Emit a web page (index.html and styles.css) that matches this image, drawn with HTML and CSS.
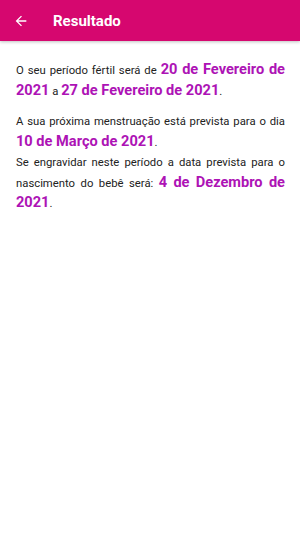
FILE: index.html
```
<!DOCTYPE html>
<html lang="pt">
<head>
<meta charset="utf-8">
<link rel="stylesheet" href="styles.css">
</head>
<body>
<header class="bar">
  <svg class="back" width="16" height="16" viewBox="0 0 24 24"><path d="M20 11H7.83l5.59-5.59L12 4l-8 8 8 8 1.41-1.41L7.83 13H20v-2z" fill="#fff"/></svg>
  <span class="title">Resultado</span>
</header>
<main class="content">
  <p class="para">O seu período fértil será de <b class="hl">20 de Fevereiro de 2021</b> a <b class="hl">27 de Fevereiro de 2021</b>.</p>
  <p class="para">A sua próxima menstruação está prevista para o dia <b class="hl">10 de Março de 2021</b>.<br>Se engravidar neste período a data prevista para o nascimento do bebê será: <b class="hl">4 de Dezembro de 2021</b>.</p>
</main>
</body>
</html>
```
FILE: styles.css
```
html, body { margin: 0; padding: 0; background: #fff; }
body { font-family: Roboto, "Noto Sans", sans-serif; width: 300px; }
.bar {
  height: 41px;
  background: #d6076f;
  display: flex;
  align-items: center;
  padding-left: 13px;
  box-shadow: 0 1px 3px rgba(0,0,0,0.25);
}
.back { display: block; }
.title {
  color: #fff;
  font-weight: 700;
  font-size: 15px;
  margin-left: 24px;
}
.content { padding: 20px 15px 0 16px; }
.para {
  margin: 0 0 10px;
  font-size: 11.3px;
  line-height: 20.5px;
  color: #222;
  text-align: justify;
}
.hl { color: #ad13b5; font-size: 14.6px; font-weight: 700; line-height: 1; }
```
